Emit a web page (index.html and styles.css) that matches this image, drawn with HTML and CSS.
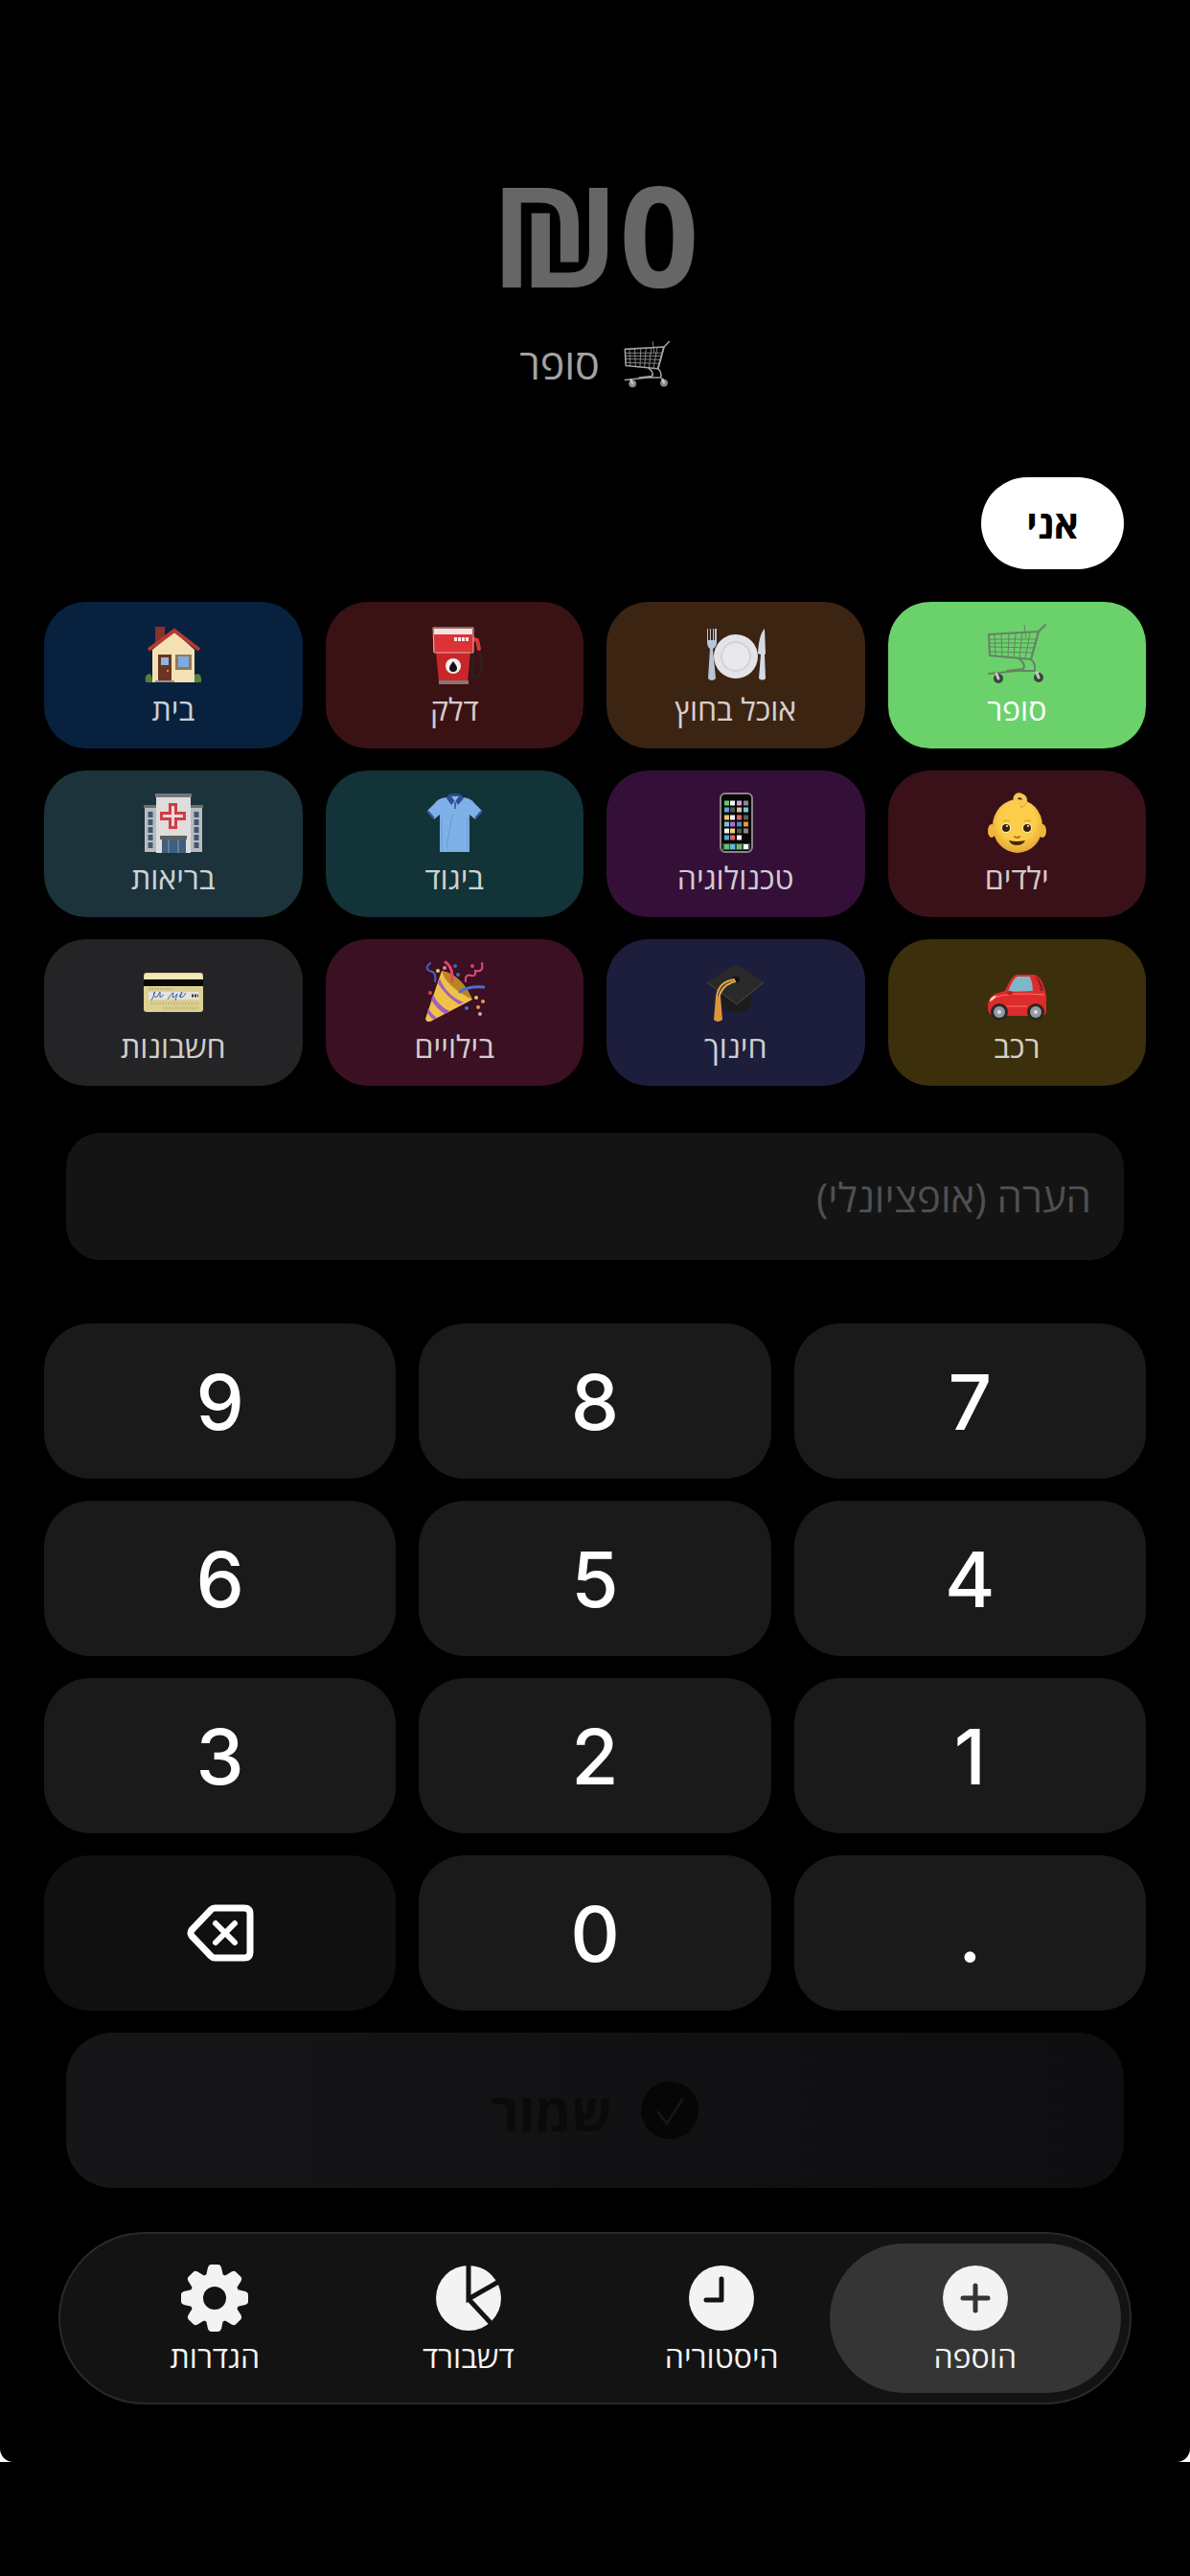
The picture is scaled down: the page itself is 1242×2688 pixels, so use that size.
FILE: index.html
```html
<!DOCTYPE html>
<html lang="he" dir="rtl">
<head>
    <meta charset="UTF-8">
    <meta name="viewport" content="width=device-width, initial-scale=1.0">
    <title>הוספה</title>
    <link rel="stylesheet" href="styles.css">
</head>
<body>

    <!-- Shared icons -->
    <svg class="icon-defs" aria-hidden="true">
        <symbol id="cart" viewBox="0 0 64 64">
            <g fill="none" stroke="currentColor" stroke-linecap="round" stroke-linejoin="round">
                <path stroke-width="2" d="M3 12 L55 9 L47 38 L4 34 Z"/>
                <path stroke-width="1" d="M9 12 L10 34 M16 11 L17 35 M24 11 L23 36 M31 11 L29 36 M38 10 L35 37 M46 10 L41 37"/>
                <path stroke-width="1" d="M3 17 H53 M3 21 H52 M4 25 L51 26 M4 30 L49 31 M40 2 L42 16"/>
                <path stroke-width="2" d="M62 2 L55 9 L47 38 Q52 42 51 50 L33 50 L3 53 M35 38 Q42 43 39 48 L22 50"/>
            </g>
            <g class="cart-wheel">
                <circle cx="13" cy="58" r="5"/>
                <circle cx="55" cy="57" r="5"/>
            </g>
            <path stroke="#c9c9c9" stroke-width="3" stroke-linecap="round" d="M11 53 L13 58 M53 52 L55 57"/>
        </symbol>
    </svg>

    <div class="phone">
        <main class="screen">

            <!-- Amount -->
            <header class="amount">
                <h1 class="amount-value" dir="ltr">₪0</h1>
                <p class="amount-category">
                    <svg class="amount-icon"><use href="#cart"/></svg>
                    <span>סופר</span>
                </p>
            </header>

            <div class="people">
                <button class="person" type="button">אני</button>
            </div>

            <!-- Categories -->
            <section class="categories">
                <button class="category groceries active" type="button">
                    <svg><use href="#cart"/></svg>
                    <span>סופר</span>
                </button>
                <button class="category dining" type="button">
                    <svg viewBox="0 0 64 64">
                        <path fill="#b9c5d8" d="M2 6 L3 6 L3 18 L5 18 L5 6 L6 6 L6 18 L8 18 L8 6 L9 6 L9 18 L10 18 L10 6 L12 6 L12 20 Q12 25 8 27 L11 58 Q7 62 3 58 L5 27 Q2 25 2 20 Z"/>
                        <path fill="#d3dae5" d="M62 6 Q56 12 55 32 L58 33 L56 58 Q60 61 63 58 L62 33 L63 32 Z"/>
                        <circle cx="32" cy="35" r="23" fill="#e4e4e8"/>
                        <circle cx="32" cy="35" r="16" fill="#d2d3d9"/>
                        <circle cx="32" cy="35" r="14" fill="#e9e9ec"/>
                    </svg>
                    <span>אוכל בחוץ</span>
                </button>
                <button class="category fuel" type="button">
                    <svg viewBox="0 0 64 64">
                        <path fill="none" stroke="#2b2323" stroke-width="2" d="M57 24 Q61 34 60 47 Q59 57 54 57 Q50 56 51 46 L52 33"/>
                        <path fill="none" stroke="#d93838" stroke-width="4" stroke-linecap="round" d="M53 17 L56 18 L58 27"/>
                        <path fill="#c9262a" d="M13 30 H49 L46 62 H16 Z"/>
                        <path fill="#8b7370" d="M16 60 H47 V64 H16 Z"/>
                        <path fill="#dd3336" d="M10 12 H52 V30 H10 Z"/>
                        <path fill="#f3e3e0" d="M11 6 H51 V12 H11 Z"/>
                        <path fill="none" stroke="#e6b5b0" d="M10 5 H52 V31 H11 Z"/>
                        <path stroke="#fbe9e8" stroke-width="4" stroke-dasharray="3 1" d="M32 17 H48"/>
                        <circle cx="31" cy="45" r="8" fill="#f2efee"/>
                        <path fill="#111" d="M31 40 Q35 45 35 47 A4 4 0 0 1 27 47 Q27 45 31 40 Z"/>
                    </svg>
                    <span>דלק</span>
                </button>
                <button class="category home" type="button">
                    <svg viewBox="0 0 64 64">
                        <path fill="#8c2f28" d="M13 4 H23 V16 L13 24 Z"/>
                        <path fill="#f4e0b3" d="M10 28 L33 9 L54 28 V62 H10 Z"/>
                        <path fill="none" stroke="#b53a33" stroke-width="4" d="M6 28 L33 8 L59 28"/>
                        <path fill="#6a3424" d="M16 33 H30 V60 H16 Z"/>
                        <path fill="#8cb8e0" d="M19 36 H27 V44 H19 Z"/>
                        <circle cx="26" cy="50" r="1" fill="#e3bf57"/>
                        <path fill="#8f7b57" d="M34 33 H51 V49 H34 Z"/>
                        <path fill="#7cabe0" d="M37 35 H48 V46 H37 Z"/>
                        <path fill="#9a9388" d="M13 60 H33 V62 H13 Z"/>
                        <path fill="#55803a" d="M3 62 Q1 54 7 53 Q10 54 10 62 Z M54 62 V54 Q62 51 61 62 Z"/>
                    </svg>
                    <span>בית</span>
                </button>

                <button class="category kids" type="button">
                    <svg viewBox="0 0 64 64">
                        <defs>
                            <radialGradient id="skin" cx="50%" cy="40%" r="60%">
                                <stop offset="0.6" stop-color="#fbcd4b"/>
                                <stop offset="1" stop-color="#e5a634"/>
                            </radialGradient>
                        </defs>
                        <ellipse cx="6" cy="41" rx="4" ry="7" fill="#f0b73c"/>
                        <ellipse cx="59" cy="41" rx="4" ry="7" fill="#f0b73c"/>
                        <ellipse cx="33" cy="36" rx="26" ry="28" fill="url(#skin)"/>
                        <path fill="none" stroke="#d99b31" stroke-width="2" d="M36 16 Q43 14 42 8"/>
                        <path fill="none" stroke="#f5c650" stroke-width="5" stroke-linecap="round" d="M31 7 Q32 3 36 4 Q42 6 40 11 Q39 13 36 13"/>
                        <ellipse cx="21" cy="38" rx="5" ry="5" fill="#fff3c9"/>
                        <ellipse cx="43" cy="38" rx="5" ry="5" fill="#fff3c9"/>
                        <circle cx="21" cy="38" r="4" fill="#3a2008"/>
                        <circle cx="43" cy="38" r="4" fill="#3a2008"/>
                        <circle cx="22" cy="36" r="1" fill="#fff"/>
                        <circle cx="44" cy="36" r="1" fill="#fff"/>
                        <path fill="none" stroke="#d89a30" stroke-width="1" d="M18 31 Q21 29 25 31 M40 31 Q44 29 47 31"/>
                        <path fill="none" stroke="#b9701f" stroke-width="2" stroke-linecap="round" d="M30 47 Q33 49 35 47"/>
                        <path fill="#4a2708" d="M24 51 Q32 53 41 51 Q39 56 32 56 Q26 56 24 51 Z"/>
                    </svg>
                    <span>ילדים</span>
                </button>
                <button class="category tech" type="button">
                    <svg viewBox="0 0 64 64">
                        <rect x="16" y="2" width="33" height="61" rx="5" fill="#070707" stroke="#8d8389" stroke-width="2"/>
                        <g stroke-width="5" stroke-dasharray="5 43">
                            <path stroke="#6fc56f" d="M20 12 H45"/>
                            <path stroke="#5aa7dd" d="M20 19 H45"/>
                            <path stroke="#f0c46a" d="M20 27 H45"/>
                            <path stroke="#79c5d6" d="M20 34 H45"/>
                            <path stroke="#f4f4f4" d="M20 41 H45"/>
                            <path stroke="#58a6dc" d="M20 48 H45"/>
                            <path stroke="#f4f4f4" d="M26 12 H45"/>
                            <path stroke="#555" d="M26 19 H45"/>
                            <path stroke="#f4f4f4" d="M26 27 H45"/>
                            <path stroke="#b666cc" d="M26 34 H45"/>
                            <path stroke="#f0d375" d="M26 41 H45"/>
                            <path stroke="#dc675c" d="M26 48 H45"/>
                            <path stroke="#cf9fdc" d="M33 12 H45"/>
                            <path stroke="#e0bd9e" d="M33 19 H45"/>
                            <path stroke="#d96960" d="M33 27 H45"/>
                            <path stroke="#4c87d6" d="M33 34 H45"/>
                            <path stroke="#555" d="M33 41 H45"/>
                            <path stroke="#f4f4f4" d="M33 48 H45"/>
                            <path stroke="#888" d="M40 12 H45"/>
                            <path stroke="#72cbdc" d="M40 19 H45"/>
                            <path stroke="#66594e" d="M40 27 H45"/>
                            <path stroke="#ec9138" d="M40 34 H45"/>
                            <path stroke="#888" d="M40 41 H45"/>
                        </g>
                        <path fill="#3d4b47" d="M18 54 H47 V61 H18 Z"/>
                        <path fill="#68c06b" d="M20 55 H25 V60 H20 Z M33 55 H38 V60 H33 Z"/>
                        <path fill="#63b7dd" d="M26 55 H31 V60 H26 Z"/>
                        <path fill="#fff" d="M40 55 H45 V60 H40 Z"/>
                    </svg>
                    <span>טכנולוגיה</span>
                </button>
                <button class="category clothes" type="button">
                    <svg viewBox="0 0 64 64">
                        <path fill="#7fb1e8" d="M24 6 Q32 12 41 6 Q50 7 53 12 L61 20 L54 29 L48 24 V63 H17 V24 L11 29 L4 20 L12 12 Q15 7 24 6 Z"/>
                        <path fill="none" stroke="#30589c" stroke-width="2" d="M4 20 L11 28 M61 20 L54 28"/>
                        <path fill="#2c4f96" d="M26 3 Q33 1 39 3 L42 7 L36 14 L33 9 L29 14 L24 7 Z"/>
                        <path fill="#8fbbea" d="M29 5 H37 L33 10 Z"/>
                        <path stroke="#3f68a5" stroke-width="2" d="M33 11 V18"/>
                        <path stroke="#6899d4" d="M19 27 V62 M46 27 V62 M30 24 L24 58"/>
                    </svg>
                    <span>ביגוד</span>
                </button>
                <button class="category health" type="button">
                    <svg viewBox="0 0 64 64">
                        <path fill="#b9bcbf" d="M2 16 H14 V63 H2 Z M50 16 H62 V63 H50 Z"/>
                        <path fill="#6a7074" d="M1 14 H15 V17 H1 Z M49 14 H63 V17 H49 Z"/>
                        <path fill="#dedddc" d="M14 5 H50 V64 H14 Z"/>
                        <path fill="#73787b" d="M13 2 H51 V6 H13 Z"/>
                        <path stroke="#3d5a72" stroke-width="5" stroke-dasharray="6 2" d="M8 21 V59 M56 21 V59"/>
                        <path fill="#cf3e44" d="M27 12 H36 V21 H45 V30 H36 V39 H27 V30 H18 V21 H27 Z"/>
                        <path fill="#f1d9d8" d="M30 15 H33 V24 H42 V27 H33 V36 H30 V27 H21 V24 H30 Z"/>
                        <path fill="#5c5f62" d="M18 46 H46 V50 H18 Z"/>
                        <path fill="#3f5f7d" d="M20 50 H45 V64 H20 Z"/>
                        <path stroke="#87a0b2" d="M27 50 V64 M37 50 V64"/>
                    </svg>
                    <span>בריאות</span>
                </button>

                <button class="category car" type="button">
                    <svg viewBox="0 0 64 64">
                        <path fill="#dd2b2b" d="M2 46 Q3 38 10 35 L20 32 Q26 17 32 15 H50 Q60 17 63 38 V54 Q62 58 58 58 H8 Q2 56 2 50 Z"/>
                        <path fill="#7fb7c9" d="M23 33 Q28 19 33 17 H46 Q49 24 49 32 Z"/>
                        <path fill="#8c2020" d="M53 18 Q59 23 60 32 L57 32 Q56 23 51 17 Z"/>
                        <path fill="none" stroke="#ff7068" stroke-width="1" d="M8 39 Q24 33 61 36 M22 48 H43"/>
                        <path fill="#ffd5ca" d="M4 42 Q6 37 11 37 Q9 41 4 43 Z"/>
                        <ellipse cx="25" cy="34" rx="3" ry="2" fill="#b01f1f"/>
                        <circle cx="14" cy="54" r="9" fill="#2a2523"/>
                        <circle cx="52" cy="54" r="9" fill="#2a2523"/>
                        <circle cx="14" cy="54" r="6" fill="#959aa3"/>
                        <circle cx="52" cy="54" r="6" fill="#959aa3"/>
                        <circle cx="14" cy="54" r="2" fill="#dfe1e4"/>
                        <circle cx="52" cy="54" r="2" fill="#dfe1e4"/>
                    </svg>
                    <span>רכב</span>
                </button>
                <button class="category education" type="button">
                    <svg viewBox="0 0 64 64">
                        <path fill="#1c1c1d" d="M17 33 V47 Q22 55 33 55 Q45 54 48 46 V33 Z"/>
                        <path fill="#2a2a2b" d="M32 4 L61 23 L33 46 L2 23 Z"/>
                        <path fill="none" stroke="#4a4a4b" d="M2 23 L33 46 L61 23"/>
                        <ellipse cx="32" cy="20" rx="4" ry="3" fill="#111"/>
                        <path fill="none" stroke="#e2a94b" stroke-width="2" d="M31 20 Q14 22 12 38 M32 22 Q17 25 14 40"/>
                        <path fill="#dd9637" d="M11 38 H16 L18 62 Q13 66 9 62 Z"/>
                    </svg>
                    <span>חינוך</span>
                </button>
                <button class="category fun" type="button">
                    <svg viewBox="0 0 64 64">
                        <path fill="#f0c248" d="M19 11 Q38 14 51 41 L7 64 Q3 65 2 61 Z"/>
                        <path fill="#b98524" d="M19 11 Q23 27 51 41 Q41 16 19 11 Z"/>
                        <path fill="#a05fc0" d="M15 24 Q23 37 37 46 L42 44 Q24 37 17 19 Z M8 41 Q13 50 22 56 L27 53 Q16 48 10 36 Z M4 54 Q6 59 11 62 L14 60 Q8 56 5 50 Z"/>
                        <g fill="none" stroke-linecap="round">
                            <path stroke="#4264cb" stroke-width="2" d="M7 3 Q1 8 6 11 Q14 12 12 22"/>
                            <path stroke="#e2436b" stroke-width="3" d="M23 2 Q31 7 30 22"/>
                            <path stroke="#4a70d0" stroke-width="3" d="M38 33 Q46 27 63 28"/>
                            <path stroke="#e5467f" stroke-width="2" d="M44 22 Q43 14 50 16 Q55 17 54 11 Q63 13 61 3"/>
                        </g>
                        <circle cx="15" cy="11" r="2" fill="#f3cf59"/>
                        <circle cx="22" cy="8" r="2" fill="#e57da0"/>
                        <circle cx="33" cy="6" r="2" fill="#4565bd"/>
                        <circle cx="36" cy="15" r="2" fill="#4565bd"/>
                        <circle cx="51" cy="6" r="2" fill="#d54563"/>
                        <circle cx="7" cy="34" r="2" fill="#d54545"/>
                        <circle cx="45" cy="50" r="2" fill="#4a70d0"/>
                        <circle cx="55" cy="39" r="2" fill="#f0bd63"/>
                        <circle cx="62" cy="43" r="2" fill="#e89857"/>
                        <circle cx="57" cy="49" r="2" fill="#e89857"/>
                        <circle cx="59" cy="56" r="2" fill="#e79ac5"/>
                    </svg>
                    <span>בילויים</span>
                </button>
                <button class="category bills" type="button">
                    <svg viewBox="0 0 64 64">
                        <rect x="1" y="13" width="62" height="41" rx="3" fill="#ddd192"/>
                        <path fill="#f1e8b4" d="M3 14 H61 L63 20 H1 Z"/>
                        <path fill="#080808" d="M1 20 H63 V27 H1 Z"/>
                        <path stroke="#9c9468" stroke-dasharray="2 1" d="M6 30 H31"/>
                        <path fill="#e5e3dc" d="M6 33 H59 V41 H6 Z"/>
                        <path fill="none" stroke="#3b63ad" d="M9 42 Q14 32 12 33 Q10 40 15 38 L18 33 L18 39 L22 36 M26 41 Q31 33 32 34 L31 39 Q35 38 36 35 L34 42 M38 38 L41 33 L39 39 Q43 39 45 34"/>
                        <path stroke="#333" stroke-width="3" stroke-dasharray="2 1" d="M51 37 H58"/>
                        <path stroke="#c8bd80" stroke-width="3" stroke-dasharray="2 1" d="M8 45 H58 M21 50 H58"/>
                    </svg>
                    <span>חשבונות</span>
                </button>
            </section>

            <input class="note" type="text" aria-label="הערה" placeholder="הערה (אופציונלי)">

            <!-- Keypad -->
            <section class="keypad">
                <button class="key" type="button">7</button>
                <button class="key" type="button">8</button>
                <button class="key" type="button">9</button>
                <button class="key" type="button">4</button>
                <button class="key" type="button">5</button>
                <button class="key" type="button">6</button>
                <button class="key" type="button">1</button>
                <button class="key" type="button">2</button>
                <button class="key" type="button">3</button>
                <button class="key" type="button">.</button>
                <button class="key" type="button">0</button>
                <button class="key key-delete" type="button" aria-label="מחיקה">
                    <svg viewBox="0 0 70 60" fill="none" stroke="currentColor" stroke-linecap="round" stroke-linejoin="round">
                        <path stroke-width="7" d="M29 4 H60 Q66 4 66 10 V50 Q66 56 60 56 H29 Q27 56 25 54 L5 33 Q3 30 5 27 L25 6 Q27 4 29 4 Z"/>
                        <path stroke-width="6" d="M30 20 L50 40 M50 20 L30 40"/>
                    </svg>
                </button>
            </section>

            <button class="save" type="submit" disabled>
                <svg viewBox="0 0 60 60">
                    <circle cx="30" cy="30" r="30" fill="#060607"/>
                    <path fill="none" stroke="#151517" stroke-width="3" stroke-linecap="round" stroke-linejoin="round" d="M18 32 L27 44 L43 19"/>
                </svg>
                <span>שמור</span>
            </button>

            <!-- Tab bar -->
            <nav class="tabs">
                <a class="tab active" href="#add">
                    <svg viewBox="0 0 70 70">
                        <circle cx="35" cy="35" r="34" fill="currentColor"/>
                        <path stroke="#353535" stroke-width="5" stroke-linecap="round" d="M35 22 V48 M22 35 H48"/>
                    </svg>
                    <span>הוספה</span>
                </a>
                <a class="tab" href="#history">
                    <svg viewBox="0 0 70 70">
                        <circle cx="35" cy="35" r="34" fill="currentColor"/>
                        <path fill="none" stroke="#131313" stroke-width="5" stroke-linecap="round" stroke-linejoin="round" d="M35 15 V37 H19"/>
                    </svg>
                    <span>היסטוריה</span>
                </a>
                <a class="tab" href="#dashboard">
                    <svg viewBox="0 0 70 70">
                        <circle cx="35" cy="35" r="34" fill="currentColor"/>
                        <path fill="none" stroke="#131313" stroke-width="5" d="M35 0 V36 L68 17 M35 36 L60 63"/>
                    </svg>
                    <span>דשבורד</span>
                </a>
                <a class="tab" href="#settings">
                    <svg viewBox="0 0 70 70">
                        <g fill="currentColor">
                            <circle cx="35" cy="35" r="26"/>
                            <path id="teeth" d="M31 0 H39 Q41 0 42 3 L44 12 H26 L28 3 Q29 0 31 0 Z M31 70 H39 Q41 70 42 67 L44 58 H26 L28 67 Q29 70 31 70 Z M0 31 V39 Q0 41 3 42 L12 44 V26 L3 28 Q0 29 0 31 Z M70 31 V39 Q70 41 67 42 L58 44 V26 L67 28 Q70 29 70 31 Z"/>
                            <use href="#teeth" transform="rotate(45 35 35)"/>
                        </g>
                        <circle cx="35" cy="35" r="12" fill="#131313"/>
                    </svg>
                    <span>הגדרות</span>
                </a>
            </nav>

        </main>
    </div>

</body>
</html>
```
FILE: styles.css
```css
/* General */
* {
    box-sizing: border-box;
}

body {
    margin: 0;
    background-color: #000;
    color: #fff;
    font-family: "Open Sans", "Liberation Sans", sans-serif;
}

button,
input {
    font-family: inherit;
    color: inherit;
    border: none;
    padding: 0;
    cursor: pointer;
}

svg {
    display: block;
}

.icon-defs {
    display: none;
}

.phone {
    background-color: #fff;
}

.screen {
    display: flex;
    flex-direction: column;
    padding: 156px 46px 60px;
    background-color: #000;
    border-radius: 0 0 14px 14px;
}

/* Amount */
.amount {
    display: flex;
    flex-direction: column;
    align-items: center;
    color: #666;
}

.amount-value {
    margin: 0;
    font-size: 146px;
    font-weight: 700;
    line-height: 176px;
}

.amount-category {
    display: flex;
    align-items: center;
    gap: 24px;
    margin: 18px 0 0;
    font-size: 43px;
    line-height: 60px;
    color: #a3a3a3;
}

.amount-icon {
    width: 50px;
    height: 50px;
    fill: #8a8a8a;
}

/* Person filter */
.people {
    display: flex;
    padding: 0 23px;
    margin-top: 88px;
}

.person {
    height: 96px;
    padding: 0 47px;
    border-radius: 48px;
    background-color: #fff;
    color: #000;
    font-size: 40px;
    font-weight: 700;
}

/* Categories */
.categories {
    display: grid;
    grid-template-columns: repeat(4, 1fr);
    gap: 23px 24px;
    margin-top: 34px;
}

.category {
    display: flex;
    flex-direction: column;
    align-items: center;
    height: 153px;
    padding-top: 22px;
    border-radius: 44px;
    color: rgba(255, 255, 255, 0.8);
    font-size: 32px;
    font-weight: 500;
    line-height: 40px;
}

.category svg {
    width: 64px;
    height: 64px;
}

.category span {
    margin-top: 6px;
}

.category.active {
    color: #fff;
}

.groceries { background-color: #6bd26b; }
.groceries svg { color: #668266; fill: #3a443a; }
.dining { background-color: #3c2413; }
.fuel { background-color: #3b1213; }
.home { background-color: #08213e; }
.kids { background-color: #3a1119; }
.tech { background-color: #341038; }
.clothes { background-color: #123337; }
.health { background-color: #1c333c; }
.car { background-color: #3c2f0c; }
.education { background-color: #1d1e3c; }
.fun { background-color: #3a1022; }
.bills { background-color: #242426; }

/* Note */
.note {
    height: 133px;
    margin: 49px 23px 0;
    padding: 0 34px;
    border-radius: 36px;
    background-color: #141414;
    font-size: 42px;
}

.note::placeholder {
    color: #4f4f52;
    opacity: 1;
}

/* Keypad */
.keypad {
    display: grid;
    grid-template-columns: repeat(3, 1fr);
    gap: 23px 24px;
    margin-top: 66px;
}

.key {
    display: flex;
    align-items: center;
    justify-content: center;
    height: 162px;
    border-radius: 48px;
    background-color: #1a1a1a;
    font-family: Inter, "Liberation Sans", sans-serif;
    font-size: 80px;
    font-weight: 500;
}

.key-delete {
    background-color: #101010;
}

.key-delete svg {
    width: 70px;
    height: 60px;
}

/* Save */
.save {
    display: flex;
    align-items: center;
    justify-content: center;
    gap: 30px;
    height: 162px;
    margin: 23px 23px 0;
    border-radius: 48px;
    background: linear-gradient(90deg, #161618, #0e0e10);
    color: #0a0a0a;
    font-size: 55px;
    font-weight: 700;
}

.save svg {
    width: 60px;
    height: 60px;
}

/* Tab bar */
.tabs {
    display: flex;
    margin: 46px 15px 0;
    padding: 10px 29px;
    border: 2px solid #292929;
    border-radius: 90px;
    background-color: #131313;
}

.tab {
    flex: 1;
    display: flex;
    flex-direction: column;
    align-items: center;
    height: 156px;
    padding-top: 22px;
    border-radius: 78px;
    color: #f3f3f3;
    font-size: 32px;
    font-weight: 500;
    line-height: 40px;
    text-decoration: none;
}

/* The highlight is wider than its column */
.tab.active {
    margin: 0 -20px;
    background-color: #353535;
    flex: 1 0 40px;
}

.tab svg {
    width: 70px;
    height: 70px;
}

.tab span {
    margin-top: 6px;
}
```
